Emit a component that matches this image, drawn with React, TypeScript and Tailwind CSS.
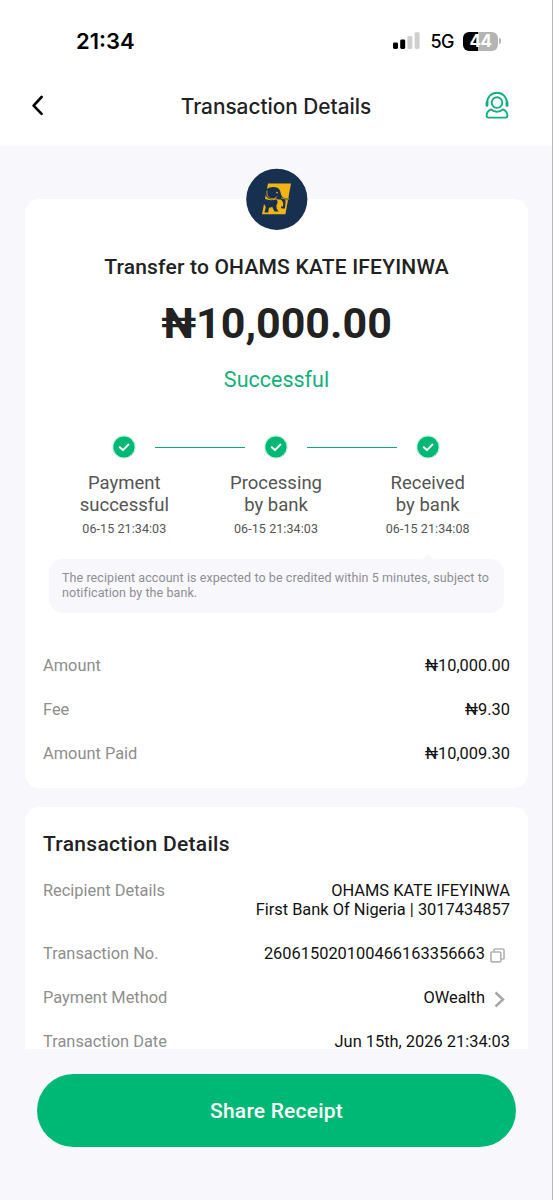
interface Step {
  title: string
  subtitle: string
  time: string
}

const steps: Step[] = [
  { title: 'Payment', subtitle: 'successful', time: '06-15 21:34:03' },
  { title: 'Processing', subtitle: 'by bank', time: '06-15 21:34:03' },
  { title: 'Received', subtitle: 'by bank', time: '06-15 21:34:08' },
]

const amounts = [
  { label: 'Amount', value: '₦10,000.00' },
  { label: 'Fee', value: '₦9.30' },
  { label: 'Amount Paid', value: '₦10,009.30' },
]

function StatusBar() {
  return (
    <div className="flex h-[66px] items-start justify-between pl-[76px] pr-[51px] pt-[29px] font-['Inter',sans-serif] text-black">
      <span className="text-[22px] font-semibold leading-6">21:34</span>
      <div className="flex h-6 items-center">
        <svg width="27" height="18" viewBox="0 0 27 18" className="mr-[10px]">
          <rect x="0" y="10.5" width="5" height="6.5" rx="1.4" fill="#000" />
          <rect x="7.2" y="7.5" width="5" height="9.5" rx="1.4" fill="#000" />
          <rect x="14.4" y="4" width="5" height="13" rx="1.4" fill="#cfcfcf" />
          <rect x="21.6" y="0.3" width="5" height="16.7" rx="1.4" fill="#cfcfcf" />
        </svg>
        <span className="mr-[9px] mt-[2px] text-[18px] font-medium leading-6 tracking-[-0.5px]">5G</span>
        <div className="flex h-[19px] w-[35px] items-center justify-center rounded-[6px] bg-[linear-gradient(90deg,#000_44%,#b4b4b4_44%)] text-[17px] font-bold leading-none tracking-[-0.5px] text-white">
          44
        </div>
        <span className="ml-[1px] h-[6px] w-[2px] rounded-r-full bg-[#b4b4b4]" />
      </div>
    </div>
  )
}

function Header() {
  return (
    <header className="flex h-20 items-start justify-between pl-[32px] pr-[42px] pt-[24px]">
      <svg width="14" height="22" viewBox="0 0 14 22" className="mt-1" fill="none" stroke="#000" strokeWidth="2.6" strokeLinecap="round" strokeLinejoin="round">
        <path d="M9.6 3 1.6 11.6l8 8.2" />
      </svg>
      <h1 className="pl-[22px] pt-px font-['Inter',sans-serif] text-[20.8px] font-medium leading-8 text-[#222]">Transaction Details</h1>
      <svg width="26" height="30" viewBox="0 0 26 30" className="mt-px" fill="none" stroke="#14b07a" strokeWidth="1.9" strokeLinecap="round" strokeLinejoin="round">
        <path d="M3.1 13.5v-1.700C3.100 6.200 7.400 1.800 13 1.800s9.900 4.400 9.900 10v1.700" />
        <path d="M3 11.500v3M23 11.500v3" strokeWidth="2.8" />
        <circle cx="13" cy="11.6" r="5.3" />
        <path d="M7 18.400c1.700 1.600 3.700 2.400 6 2.400s4.300-.8 6-2.400c2.800 1.400 4.400 3.700 4.400 6.200 0 1.300-.7 2-2 2H4.600c-1.300 0-2-.7-2-2 0-2.500 1.600-4.800 4.400-6.200Z" />
      </svg>
    </header>
  )
}

function BankLogo() {
  return (
    <svg width="62" height="62" viewBox="0 0 62 62" className="relative">
      <circle cx="30.8" cy="31.3" r="30.6" fill="#17304f" />
      <path d="M22 15.500h23L39.400 46.200H16Z" fill="#f0b414" />
      {/* head and trunk */}
      <path d="M20 22c2.500-3.500 10.500-4.200 13.300-.6 1.800 2.400 1.200 5 2.700 7 1.400 1.700 4 2.200 7.500 2v1.500l-4.200.4c.6 3-.3 5.500-.4 8.200h-3c-.9-.6-1-1.500-.8-2.300l1.500.5c1.500-2.700.5-5.700-2-7.200-2.400.3-3.700-.3-4.600-1.500-2 2-5.500 1.800-8 .2-2.400-1.700-3-5-2-8.200Z" fill="#17304f" />
      {/* body and legs */}
      <path d="M18.500 30.500c3.500 1.900 8 2.300 12 .7 1.600 2.100 1.300 4.500-.2 6.300l.5 3.500 1.900 2.500h-4.200l-2.200-4.600-3.300.9-.8 4.700h-3.700l1.300-5.500-2-3.500Z" fill="#17304f" />
      <path d="M21 23c-.8 4.500 1.500 7.300 4.800 7.700 2.300.2 4.100-.6 5-2M35.500 30l4.500 1.300 3-.4" fill="none" stroke="#f0b414" strokeWidth="0.8" strokeLinecap="round" />
      <circle cx="31" cy="24.6" r="0.9" fill="#f0b414" />
    </svg>
  )
}

function CheckBadge() {
  return (
    <svg width="24" height="24" viewBox="0 0 24 24" fill="none">
      <circle cx="12" cy="12" r="11.8" fill="#c4f3dd" />
      <circle cx="12" cy="12" r="10.6" fill="#00b875" />
      <path d="m7.8 12.2 3.100 2.900 5.600-5.600" stroke="#fff" strokeWidth="2" strokeLinecap="round" strokeLinejoin="round" />
    </svg>
  )
}

function Steps() {
  return (
    <div className="ml-[23.5px] mr-[24.5px] mt-[41px] flex">
      {steps.map((step, i) => (
        <div key={step.title} className="flex-1 text-center">
          <div className="relative flex justify-center">
            <CheckBadge />
            {i < steps.length - 1 && (
              <span className="absolute left-[calc(50%+31px)] top-3 h-px w-[90px] bg-[#12a873]" />
            )}
          </div>
          <p className="mt-[14px] text-[18.5px] leading-[21.5px] text-[#555]">
            {step.title}
            <br />
            {step.subtitle}
          </p>
          <p className="mt-[5px] text-[12.5px] leading-4 tracking-[0.08px] text-[#555]">{step.time}</p>
        </div>
      ))}
    </div>
  )
}

function Row({ label, children }: { label: string; children: React.ReactNode }) {
  return (
    <div className="flex items-start justify-between text-[16.4px] leading-5">
      <span className="text-[#8e8e8e]">{label}</span>
      <div className="flex items-center text-right text-[#111]">{children}</div>
    </div>
  )
}

export default function App() {
  return (
    <div className="flex h-[1200px] w-[553px] flex-col overflow-hidden border-r border-[#b5b5ba] bg-[#f7f7fc] font-['Roboto',sans-serif]">
      <div className="h-[146px] shrink-0 bg-white">
        <StatusBar />
        <Header />
      </div>

      <main className="h-[903px] shrink-0 overflow-hidden pl-[25px] pr-6 pt-[53px]">
        <section className="flow-root h-[589px] rounded-[14px] bg-white">
          <div className="-mt-[31px] flex h-[85px] justify-center">
            <BankLogo />
          </div>
          <h2 className="text-center text-[21px] font-medium leading-7 tracking-[0.2px] text-[#222]">Transfer to OHAMS KATE IFEYINWA</h2>
          <p className="mt-4 text-center text-[43px] font-bold leading-[52px] text-[#222]">₦10,000.00</p>
          <p className="mt-[17px] text-center text-[21.5px] leading-7 text-[#14b07a]">Successful</p>
          <Steps />

          <div className="relative mx-6 mt-[22px] h-[54px] rounded-[14px] bg-[#f7f7fc] pl-[13px] pr-2 pt-3 text-[12.5px] leading-[14.6px] tracking-[0.08px] text-[#8e8e93]">
            <span className="absolute -top-[5px] left-[374px] border-x-[5px] border-b-[5px] border-x-transparent border-b-[#f7f7fc]" />
            The recipient account is expected to be credited within 5 minutes, subject to notification by the bank.
          </div>

          <div className="mt-[43px] flex flex-col gap-6 px-[18px]">
            {amounts.map((item) => (
              <Row key={item.label} label={item.label}>
                {item.value}
              </Row>
            ))}
          </div>
        </section>

        <section className="mt-[19px] rounded-[14px] bg-white px-[18px] pb-8 pt-[23px]">
          <h2 className="text-[21px] font-medium leading-7 tracking-[0.3px] text-[#222]">Transaction Details</h2>
          <div className="mt-[23px] flex flex-col gap-6">
            <Row label="Recipient Details">
              <p className="h-[39px] leading-[19.3px]">
                OHAMS KATE IFEYINWA
                <br />
                First Bank Of Nigeria | 3017434857
              </p>
            </Row>
            <Row label="Transaction No.">
              260615020100466163356663
              <svg width="15" height="15" viewBox="0 0 15 15" className="ml-[5px] mr-[5px] mt-[3px]" fill="none" stroke="#b4b4b4" strokeWidth="1.7" strokeLinejoin="round">
                <rect x="1" y="4" width="9.8" height="9.8" rx="1" />
                <path d="M4 3.800V2c0-.6.4-1 1-1h8c.6 0 1 .4 1 1v8c0 .6-.4 1-1 1h-2" />
              </svg>
            </Row>
            <Row label="Payment Method">
              OWealth
              <svg width="11" height="17" viewBox="0 0 11 17" className="ml-[9px] mr-[5px] mt-[3px]" fill="none" stroke="#a6a6a6" strokeWidth="2.4">
                <path d="m1.500 1.500 7.500 7-7.500 7" />
              </svg>
            </Row>
            <Row label="Transaction Date">Jun 15th, 2026 21:34:03</Row>
          </div>
        </section>
      </main>

      <footer className="pl-[37px] pr-9 pt-[24.5px]">
        <button className="h-[73px] w-full rounded-full bg-[#00b875] pt-[3px] text-[21px] font-medium tracking-[0.2px] text-white">
          Share Receipt
        </button>
      </footer>
    </div>
  )
}
